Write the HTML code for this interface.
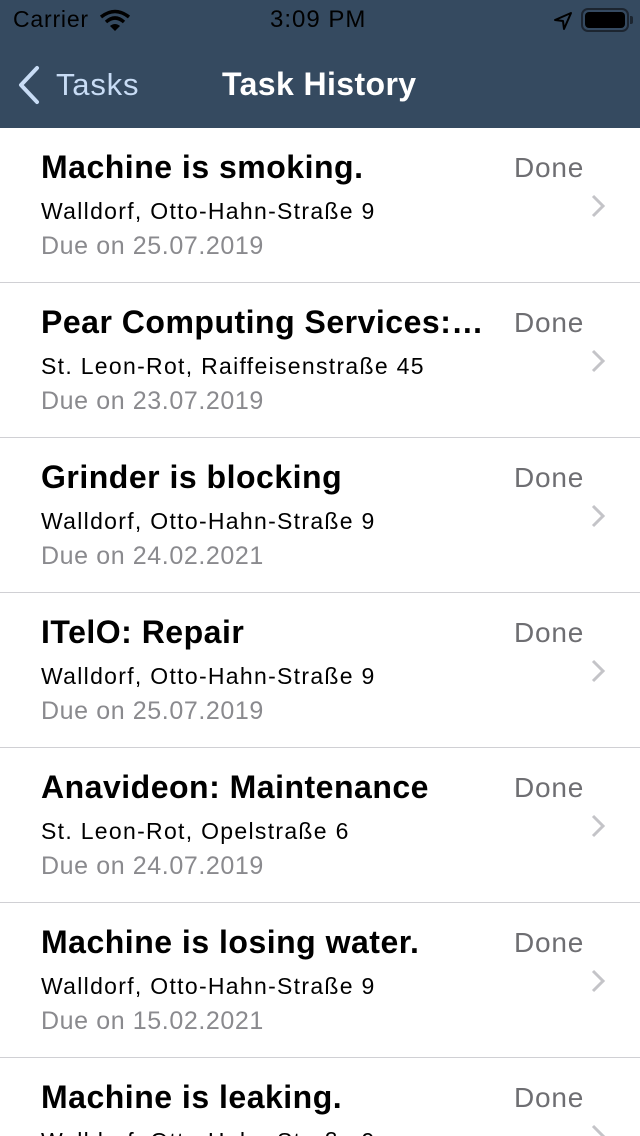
<!DOCTYPE html>
<html style="width:640px;height:1136px;overflow:hidden"><head><meta charset="utf-8"><style>
*{margin:0;padding:0;box-sizing:border-box}
body{width:640px;height:1136px;overflow:hidden;background:#fff;font-family:"Liberation Sans",sans-serif;position:relative}
.hdr{position:absolute;left:0;top:0;width:640px;height:128px;background:#354a60}
.st{position:absolute;top:6px;font-size:23px;color:#000}
.row{position:absolute;left:0;width:640px;height:155px;border-bottom:1px solid #d0d0d4}
.t{position:absolute;left:41px;top:21px;font-size:32px;font-weight:bold;color:#000;white-space:nowrap;letter-spacing:0.5px}
.a{position:absolute;left:41px;top:70px;font-size:23px;color:#000;white-space:nowrap;letter-spacing:1.3px}
.d{position:absolute;left:41px;top:104px;font-size:25px;color:#8a8a8e;white-space:nowrap;letter-spacing:0.6px}
.dn{position:absolute;left:514px;top:24px;font-size:28px;color:#6e6e72;letter-spacing:0.8px}
.ch{position:absolute;left:590px;top:65px}
</style></head><body>
<div class="hdr">
<div class="st" style="left:13px;letter-spacing:0.8px">Carrier</div>
<svg style="position:absolute;left:99px;top:9px" width="32" height="22" viewBox="0 0 32 22"><path d="M2 8 Q16 -3 30 8" stroke="#000" stroke-width="3.5" fill="none"/><path d="M7 13 Q16 5 25 13" stroke="#000" stroke-width="3.5" fill="none"/><path d="M11 17 L16 22 L21 17 Q16 13 11 17Z" fill="#000"/></svg>
<div class="st" style="left:270px;font-size:24px;letter-spacing:1px">3:09 PM</div>
<svg style="position:absolute;left:553px;top:11px" width="20" height="20" viewBox="0 0 20 20"><path d="M18 2 L2 9 L10 10 L11 18 Z" stroke="#000" stroke-width="2" fill="none" stroke-linejoin="round"/></svg>
<div style="position:absolute;left:581px;top:8px;width:48px;height:24px;border:2px solid #1c2530;border-radius:7px;padding:2px"><div style="width:100%;height:100%;background:#000;border-radius:4px"></div></div>
<div style="position:absolute;left:630px;top:16px;width:3px;height:8px;background:#1c2530;border-radius:0 2px 2px 0"></div>
<svg style="position:absolute;left:15px;top:65px" width="28" height="40" viewBox="0 0 28 40"><path d="M22 3 L6 20 L22 37" stroke="#c8dcf5" stroke-width="4" fill="none" stroke-linecap="round" stroke-linejoin="round"/></svg>
<div style="position:absolute;left:56px;top:67px;font-size:31px;color:#c8dcf5;letter-spacing:0.8px">Tasks</div>
<div style="position:absolute;left:222px;top:66px;font-size:32px;font-weight:bold;color:#fff;letter-spacing:0.4px">Task History</div>
</div>

<div class="row" style="top:128px"><div class="t">Machine is smoking.</div><div class="a">Walldorf, Otto-Hahn-Straße 9</div><div class="d">Due on 25.07.2019</div><div class="dn">Done</div><svg class="ch" width="16" height="26" viewBox="0 0 16 26"><path d="M3 3 L13 13 L3 23" stroke="#c4c4c8" stroke-width="3" fill="none"/></svg></div>
<div class="row" style="top:283px"><div class="t">Pear Computing Services:…</div><div class="a">St. Leon-Rot, Raiffeisenstraße 45</div><div class="d">Due on 23.07.2019</div><div class="dn">Done</div><svg class="ch" width="16" height="26" viewBox="0 0 16 26"><path d="M3 3 L13 13 L3 23" stroke="#c4c4c8" stroke-width="3" fill="none"/></svg></div>
<div class="row" style="top:438px"><div class="t">Grinder is blocking</div><div class="a">Walldorf, Otto-Hahn-Straße 9</div><div class="d">Due on 24.02.2021</div><div class="dn">Done</div><svg class="ch" width="16" height="26" viewBox="0 0 16 26"><path d="M3 3 L13 13 L3 23" stroke="#c4c4c8" stroke-width="3" fill="none"/></svg></div>
<div class="row" style="top:593px"><div class="t">ITelO: Repair</div><div class="a">Walldorf, Otto-Hahn-Straße 9</div><div class="d">Due on 25.07.2019</div><div class="dn">Done</div><svg class="ch" width="16" height="26" viewBox="0 0 16 26"><path d="M3 3 L13 13 L3 23" stroke="#c4c4c8" stroke-width="3" fill="none"/></svg></div>
<div class="row" style="top:748px"><div class="t">Anavideon: Maintenance</div><div class="a">St. Leon-Rot, Opelstraße 6</div><div class="d">Due on 24.07.2019</div><div class="dn">Done</div><svg class="ch" width="16" height="26" viewBox="0 0 16 26"><path d="M3 3 L13 13 L3 23" stroke="#c4c4c8" stroke-width="3" fill="none"/></svg></div>
<div class="row" style="top:903px"><div class="t">Machine is losing water.</div><div class="a">Walldorf, Otto-Hahn-Straße 9</div><div class="d">Due on 15.02.2021</div><div class="dn">Done</div><svg class="ch" width="16" height="26" viewBox="0 0 16 26"><path d="M3 3 L13 13 L3 23" stroke="#c4c4c8" stroke-width="3" fill="none"/></svg></div>
<div class="row" style="top:1058px;height:78px;border-bottom:none;overflow:hidden"><div class="t">Machine is leaking.</div><div class="a">Walldorf, Otto-Hahn-Straße 9</div><div class="dn">Done</div><svg class="ch" width="16" height="26" viewBox="0 0 16 26"><path d="M3 3 L13 13 L3 23" stroke="#c4c4c8" stroke-width="3" fill="none"/></svg></div>
</body></html>
